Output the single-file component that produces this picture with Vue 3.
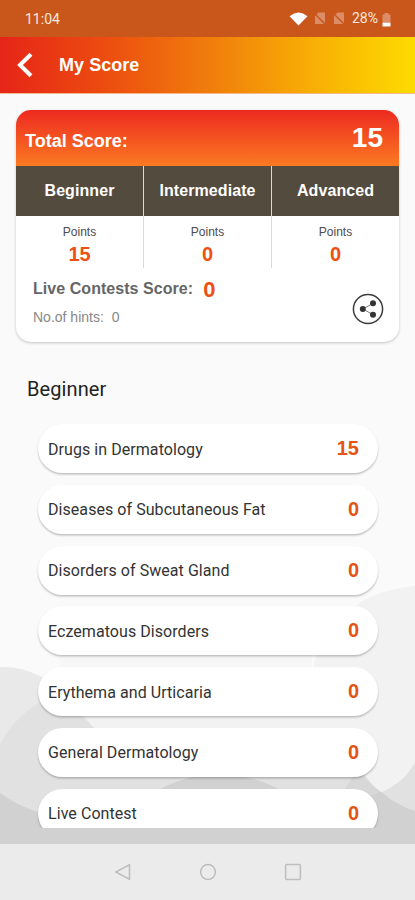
<script setup>
const levels = [
  { name: 'Beginner', points: 15 },
  { name: 'Intermediate', points: 0 },
  { name: 'Advanced', points: 0 },
]
const topics = [
  { name: 'Drugs in Dermatology', score: 15 },
  { name: 'Diseases of Subcutaneous Fat', score: 0 },
  { name: 'Disorders of Sweat Gland', score: 0 },
  { name: 'Eczematous Disorders', score: 0 },
  { name: 'Erythema and Urticaria', score: 0 },
  { name: 'General Dermatology', score: 0 },
  { name: 'Live Contest', score: 0 },
]
</script>

<template>
  <div class="screen">
    <svg class="backdrop" viewBox="0 0 415 844" aria-hidden="true">
      <path d="M60 672H312Q319 633 360 602Q386 588 415 586V844H60Z" fill="#f2f2f2" />
      <path d="M60 655H312V672H60Z" fill="#f7f7f7" />
      <path d="M0 667Q20 666 40 676Q80 696 110 760V844H0Z" fill="#e9e9e9" />
      <path d="M0 744Q14 718 40 702Q70 701 94 728Q120 775 180 775H365Q371 783 380 793Q405 782 415 762V844H0Z" fill="#e1e1e1" />
      <path d="M0 793Q18 806 38 812L150 795Q180 775 218 775Q256 775 282 791L365 795Q375 795 380 791Q396 805 415 811V844H0Z" fill="#d1d1d1" />
      <path d="M358 770Q369 784 380 791L370 795H340Z" fill="#d7d7d7" />
    </svg>

    <header class="status">
      <span class="clock">11:04</span>
      <div class="indicators">
        <svg class="wifi" viewBox="0 0 19 14"><path d="M.5 4.200Q9.500-3 18.500 4.200L9.500 13.500Z" fill="#fff" /></svg>
        <svg v-for="n in 2" :key="n" class="sim" viewBox="0 0 12 13">
          <path d="M4.500.500H11V12H1V4Z" fill="#dc8c66" />
          <path d="M0 1L11.500 12.500" stroke="#c9571c" stroke-width="1.500" />
        </svg>
        <span class="percent">28%</span>
        <svg class="battery" viewBox="0 0 9 14">
          <path d="M2.500 0H6.500V1.500H8.500V9H.5V1.500H2.500Z" fill="#dc8c66" />
          <path d="M.5 9.500H8.500V13.500H.5Z" fill="#fff" />
        </svg>
      </div>
    </header>

    <nav class="bar">
      <svg class="back" viewBox="0 0 18 26"><path d="M15 2.200L4 13L15 23.800" fill="none" stroke="#fff" stroke-width="4" /></svg>
      <h1>My Score</h1>
    </nav>

    <section class="card">
      <div class="total"><span>Total Score:</span><strong>15</strong></div>
      <div class="levels">
        <div v-for="level in levels" :key="level.name" class="level">
          <div class="level-name">{{ level.name }}</div>
          <div class="level-body">
            <span class="caption">Points</span>
            <span class="points">{{ level.points }}</span>
          </div>
        </div>
      </div>
      <div class="summary">
        <div>
          <div class="contest"><span>Live Contests Score:</span><b>0</b></div>
          <div class="hints">No.of hints:<span>0</span></div>
        </div>
        <svg class="share" viewBox="0 0 32 32">
          <circle cx="16" cy="16" r="14.600" fill="none" stroke="#3c3c3c" stroke-width="1.500" />
          <path d="M21 10.300L11 16L21 21.700" fill="none" stroke="#777" stroke-width="1" />
          <g fill="#333"><circle cx="21" cy="10.300" r="3" /><circle cx="10.800" cy="16" r="3" /><circle cx="21" cy="21.700" r="3" /></g>
        </svg>
      </div>
    </section>

    <h2>Beginner</h2>
    <ul class="topics">
      <li v-for="topic in topics" :key="topic.name">
        <span>{{ topic.name }}</span><b>{{ topic.score }}</b>
      </li>
    </ul>

    <footer class="keys">
      <svg viewBox="0 0 18 18"><path d="M16.500 1.800V16.200L2.800 9Z" /></svg>
      <svg viewBox="0 0 18 18"><circle cx="9" cy="9" r="7.400" /></svg>
      <svg viewBox="0 0 18 18"><rect x="1.600" y="1.600" width="14.800" height="14.800" rx="1.500" /></svg>
    </footer>
  </div>
</template>

<style>
body { margin: 0; background: #fafafa; }
</style>

<style scoped>
* { box-sizing: border-box; }
.screen {
  position: relative;
  display: flex;
  flex-direction: column;
  width: 415px;
  height: 900px;
  overflow: hidden;
  background: #fafafa;
  font-family: "Liberation Sans", Arial, sans-serif;
}
.screen > * { flex-shrink: 0; position: relative; }
.screen > .backdrop { position: absolute; top: 0; left: 0; width: 415px; height: 844px; }
.status {
  display: flex;
  justify-content: space-between;
  height: 37px;
  padding: 0 24px 0 25px;
  background: #c9571c;
  color: #fbe9df;
  font: 14px/37px Roboto, sans-serif;
}
.clock { padding-top: 1px; line-height: 36px; }
.indicators { display: flex; align-items: center; }
.wifi { width: 19px; height: 14px; margin-right: 6px; }
.sim { width: 12px; height: 13px; margin-right: 7px; }
.percent { margin-right: 4px; }
.battery { width: 9px; height: 14px; margin-top: 2px; }
.bar {
  display: flex;
  align-items: center;
  height: 57px;
  padding-left: 16px;
  background: linear-gradient(90deg, #e62518 0, #ec4a10 24%, #f07c0c 50%, #f9b005 76%, #fddb00 100%);
  border-bottom: 1px solid #f3b98c;
}
.back { width: 18px; height: 26px; margin-right: 25px; }
h1 { margin: 0; color: #fff; font-size: 18px; line-height: 22px; letter-spacing: .05px; }
.card {
  width: 383px;
  height: 232px;
  margin: 16px 0 0 16px;
  overflow: hidden;
  border-radius: 15px;
  background: #fff;
  box-shadow: 0 1px 3px rgba(0, 0, 0, .22);
}
.total {
  display: flex;
  align-items: center;
  justify-content: space-between;
  height: 56px;
  padding: 0 16px 0 9px;
  background: linear-gradient(#ed2a20, #fb7a22);
  color: #fff;
  font-size: 18px;
  font-weight: bold;
}
.total span { padding-top: 6px; }
.total strong { font-size: 28px; line-height: 32px; }
.levels { display: grid; grid-template-columns: 127px 128px 128px; height: 102px; }
.level + .level { border-left: 1px solid #d9d9d9; }
.level-name {
  height: 50px;
  background: #534b3d;
  color: #fff;
  font-size: 16px;
  font-weight: bold;
  line-height: 50px;
  letter-spacing: .08px;
  text-align: center;
}
.level-body { display: flex; flex-direction: column; align-items: center; padding-top: 8px; }
.caption { color: #4c4c4c; font-size: 12px; line-height: 16px; }
.points { color: #ec5015; font-size: 20px; font-weight: bold; line-height: 24px; margin-top: 2px; }
.summary { display: flex; justify-content: space-between; padding: 6px 15px 0 17px; }
.contest { display: flex; align-items: center; color: #666; font-size: 16px; font-weight: bold; line-height: 26px; letter-spacing: .05px; }
.contest b { margin: 3px 0 0 10px; color: #ec5015; font-size: 22px; line-height: 26px; }
.hints { color: #888; font-size: 14px; line-height: 18px; margin-top: 5px; }
.hints span { margin-left: 8px; }
.share { width: 32px; height: 32px; margin-top: 19px; }
h2 { margin: 34px 0 0 27px; color: #222; font: 400 20px/26px Roboto, sans-serif; letter-spacing: .1px; }
.topics {
  height: 412px;
  margin: 14px 0 0;
  padding: 8px 37px 0 38px;
  overflow: hidden;
  list-style: none;
}
.topics li {
  display: flex;
  align-items: center;
  justify-content: space-between;
  height: 49px;
  margin-bottom: 11.8px;
  padding: 0 19px 0 10px;
  border-radius: 25px;
  background: #fff;
  box-shadow: 0 1.5px 2px rgba(0, 0, 0, .24);
  color: #333;
  font: 16px/20px Roboto, sans-serif;
  letter-spacing: .06px;
}
.topics li span { padding-top: 2px; }
.topics li b { color: #e35416; font: bold 20px/24px "Liberation Sans", Arial, sans-serif; letter-spacing: 0; margin-top: -1px; }
.keys {
  display: flex;
  align-items: center;
  justify-content: center;
  gap: 67.5px;
  height: 56px;
  margin-top: auto;
  background: #ebebeb;
}
.keys svg { width: 18px; height: 18px; fill: none; stroke: #bdbdbd; stroke-width: 1.5; }
</style>
